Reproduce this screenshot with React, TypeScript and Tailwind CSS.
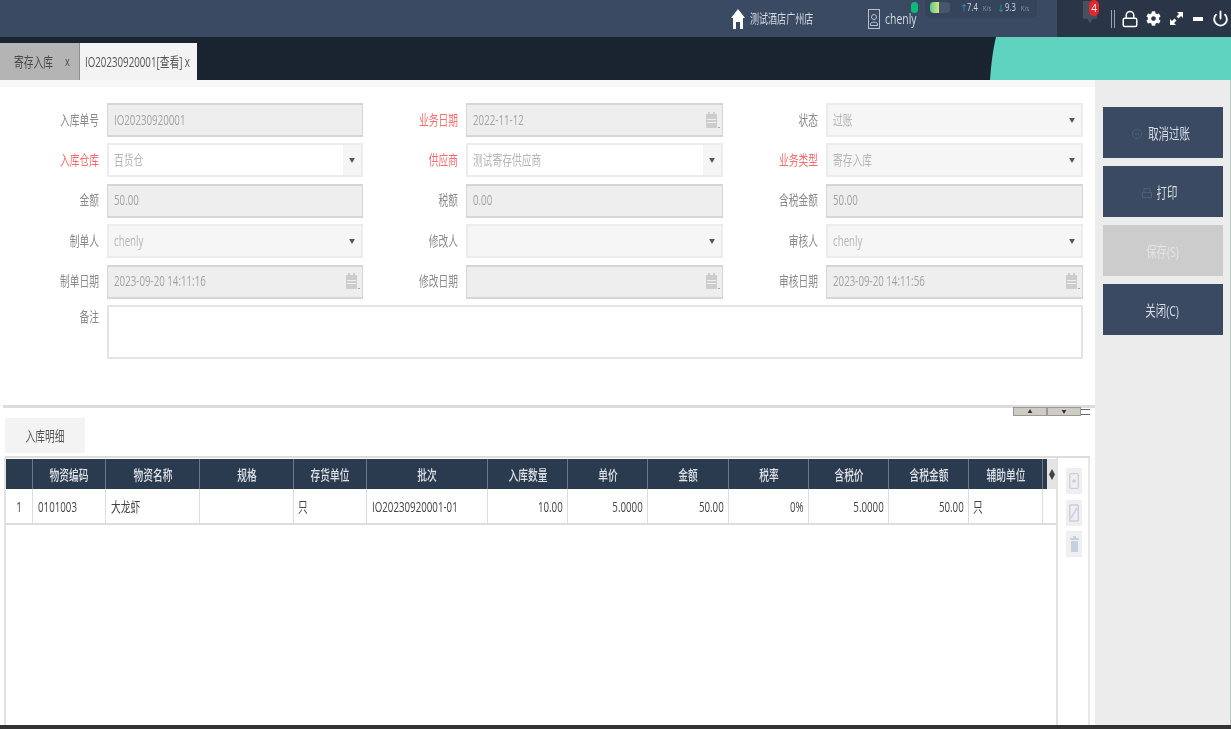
import { ReactNode } from 'react'
import { FaCog } from 'react-icons/fa'
import { Lock, Power } from 'lucide-react'

const FONT = "font-['Open_Sans','Noto_Sans_CJK_SC',sans-serif]"

const GRID = 'grid grid-cols-[27px_73px_94px_94px_73px_121px_80px_80px_81px_80px_80px_80px_74px_4px]'

const HEADERS = ['', '物资编码', '物资名称', '规格', '存货单位', '批次', '入库数量', '单价', '金额', '税率', '含税价', '含税金额', '辅助单位', '']

const ROW: { text: string; cls: string; align: 'l' | 'c' | 'r' }[] = [
  { text: '1', cls: 'justify-center', align: 'c' },
  { text: '0101003', cls: 'pl-[5px]', align: 'l' },
  { text: '大龙虾', cls: 'pl-[5px]', align: 'l' },
  { text: '', cls: '', align: 'l' },
  { text: '只', cls: 'pl-[4px]', align: 'l' },
  { text: 'IO20230920001-01', cls: 'pl-[5px]', align: 'l' },
  { text: '10.00', cls: 'justify-end pr-[4px]', align: 'r' },
  { text: '5.0000', cls: 'justify-end pr-[4px]', align: 'r' },
  { text: '50.00', cls: 'justify-end pr-[4px]', align: 'r' },
  { text: '0%', cls: 'justify-end pr-[4px]', align: 'r' },
  { text: '5.0000', cls: 'justify-end pr-[4px]', align: 'r' },
  { text: '50.00', cls: 'justify-end pr-[4px]', align: 'r' },
  { text: '只', cls: 'pl-[4px]', align: 'l' },
  { text: '', cls: '', align: 'l' },
]

// the reference text is squeezed sideways, so every string goes through this
function T({ children, align = 'l', className = '' }: { children?: ReactNode; align?: 'l' | 'c' | 'r'; className?: string }) {
  const origin = align === 'l' ? 'origin-left' : align === 'r' ? 'origin-right' : 'origin-center'
  return <span className={`inline-block whitespace-nowrap scale-x-[0.695] ${origin} ${className}`}>{children}</span>
}

function CalendarIcon() {
  return (
    <svg width="16" height="19" viewBox="0 0 16 19" className="text-[#cdcdcd]">
      <rect x="1" y="3" width="11" height="14" rx="1" fill="currentColor" />
      <rect x="3" y="1" width="2" height="4" fill="currentColor" />
      <rect x="8" y="1" width="2" height="4" fill="currentColor" />
      <rect x="2" y="8" width="9" height="1" fill="#f0f0f0" />
      <rect x="2" y="11" width="9" height="1" fill="#f0f0f0" />
      <rect x="13" y="16" width="2" height="1" fill="#aaa" />
    </svg>
  )
}

function Caret() {
  return (
    <svg width="6" height="5" viewBox="0 0 7 6" fill="#555">
      <path d="M0 0h7L3.5 6z" />
    </svg>
  )
}

function Label({ text, red }: { text: string; red?: boolean }) {
  return (
    <div className={`flex items-center justify-end pr-2 pb-[2px] text-[14px] ${red ? 'text-[#f56c6c]' : 'text-[#8a8a8a]'}`}>
      <T align="r">{text}</T>
    </div>
  )
}

function Input({ value }: { value?: string }) {
  return (
    <div className="flex items-center h-[34px] bg-[#eeeeee] border-t-2 border-x border-b-2 border-[#d6d6d6] pl-[6px] pb-[2px] text-[14px] text-[#a3a3a3]">
      <T>{value}</T>
    </div>
  )
}

function DateInput({ value }: { value?: string }) {
  return (
    <div className="flex items-center justify-between h-[34px] bg-[#eeeeee] border-t-2 border-x border-b-2 border-[#d6d6d6] pl-[6px] pr-[1px] text-[14px] text-[#a3a3a3]">
      <span className="pb-[2px]"><T>{value}</T></span>
      <CalendarIcon />
    </div>
  )
}

function Select({ value, white }: { value?: string; white?: boolean }) {
  return (
    <div className={`flex items-center h-[34px] border-2 border-[#ececec] pl-[5px] text-[14px] text-[#b5b5b5] ${white ? 'bg-white' : 'bg-[#f6f6f6]'}`}>
      <span className="flex-1 min-w-0 pb-[2px]">
        <T>{value}</T>
      </span>
      <span className={`flex items-center justify-center h-full w-[18px] ${white ? 'bg-[#f5f5f5]' : ''}`}>
        <Caret />
      </span>
    </div>
  )
}

function SideButton({ children, disabled }: { children: ReactNode; disabled?: boolean }) {
  return (
    <button className={`flex items-center justify-center w-[120px] h-[51px] pt-[2px] text-[15px] ${disabled ? 'bg-[#cccccc] text-[#e4e4e4]' : 'bg-[#3a4a63] text-[#d8dde4]'}`}>
      {children}
    </button>
  )
}

function ToolIcon({ children }: { children: ReactNode }) {
  return (
    <div className="flex items-center justify-center w-[16px] h-[26px] bg-[#efefef]">
      {children}
    </div>
  )
}

export default function App() {
  return (
    <div className={`${FONT} relative w-[1231px] h-[729px] overflow-hidden flex flex-col bg-white blur-[0.5px]`}>
      {/* top bar */}
      <header className="flex h-[37px] shrink-0 bg-[#3a4a63] text-[#d5dae2]">
        <div className="flex-1 flex items-center relative">
          <div className="flex items-center ml-[731px] gap-[5px] text-[13px]">
            <svg width="14" height="20" viewBox="0 0 14 20" fill="white">
              <path d="M7 0 14 9h-2v11H9v-7H5v7H2V9H0z" />
            </svg>
            <T>测试酒店广州店</T>
          </div>
          <div className="flex items-center ml-[27px] gap-[5px] text-[15px]">
            <svg width="12" height="20" viewBox="0 0 12 20" fill="none" stroke="#b9c0cb" strokeWidth="1">
              <rect x="0.5" y="0.5" width="11" height="19" />
              <circle cx="6" cy="8" r="2.5" />
              <path d="M2.5 15c0-2.5 7-2.5 7 0v1.5h-7z" />
            </svg>
            <T>chenly</T>
          </div>
          {/* network status */}
          <div className="absolute left-[911px] top-[2px] flex items-start">
            <span className="w-[7px] h-[11px] rounded-full bg-[#0fb97a]" />
            <div className="flex items-start h-[18px] -mt-[2px] ml-[7px] pt-[2px] pl-[5px] pr-[5px] rounded-b-[6px] bg-[#35445b] gap-[10px]">
              <div className="flex w-[20px] h-[11px] rounded-[4px] overflow-hidden bg-[#46566d]">
                <span className="w-[9px] bg-gradient-to-r from-[#3fd08a] to-[#d8e27a]" />
              </div>
              <div className="flex items-center h-[11px] w-[72px] text-[11px]">
                <span className="w-[7px] text-[8px] text-[#29a5e6]">↑</span>
                <span className="w-[16px]"><T>7.4</T></span>
                <span className="w-[14px] text-[8px] text-[#8a96a6]"><T>K/s</T></span>
                <span className="w-[8px] text-[8px] text-[#18c07a]">↓</span>
                <span className="w-[16px]"><T>9.3</T></span>
                <span className="w-[10px] text-[8px] text-[#8a96a6]"><T>K/s</T></span>
              </div>
            </div>
          </div>
        </div>
        <div className="flex items-center w-[174px] bg-[#2a3547] text-white relative">
          <svg width="16" height="25" viewBox="0 0 18 26" className="ml-[25px] -mt-[12px]" fill="#46515f">
            <path d="M1 0h16v20h-5l-3 5-3-5H1z" />
          </svg>
          <span className="absolute left-[32px] top-0 flex items-center justify-center w-[10px] h-[16px] rounded-full bg-[#e8242c] text-[10px] text-white">4</span>
          <span className="ml-[13px] w-[4px] h-[18px] border-x border-[#9aa3af]" />
          <Lock size={18} strokeWidth={2} className="ml-[6px]" />
          <FaCog size={15} className="ml-[7px]" />
          <svg width="13" height="13" viewBox="0 0 13 13" fill="white" className="ml-[9px]">
            <path d="M7 0h6v6l-2-2-2.5 2.5-2-2L9 2zM0 13V7l2 2 2.5-2.5 2 2L4 11l2 2z" />
          </svg>
          <span className="ml-[10px] w-[10px] h-[4px] bg-white" />
          <Power size={17} strokeWidth={2.6} className="ml-[9px]" />
        </div>
      </header>

      {/* tab bar */}
      <div className="relative flex items-end h-[43px] shrink-0 bg-[#1a2330]">
        <div className="flex items-center h-[37px] w-[80px] bg-[#b4b4b4] border-r border-[#8d8d8d] text-[14px] text-[#4a4a4a]">
          <span className="ml-[14px] w-[51px]"><T>寄存入库</T></span>
          <T className="text-[13px]">x</T>
        </div>
        <div className="flex items-center h-[37px] w-[117px] bg-[#f3f3f3] text-[14px] text-[#555]">
          <span className="ml-[5px]"><T>IO20230920001[查看] x</T></span>
        </div>
        <svg className="absolute right-0 top-0" width="241" height="43" viewBox="0 0 241 43" preserveAspectRatio="none">
          <path d="M6 0H241V43H0C1 28 3 12 6 0z" fill="#5fd3bf" />
        </svg>
      </div>

      {/* body */}
      <div className="flex flex-1 min-h-0">
        <main className="flex-1 min-w-0 flex flex-col bg-white">
          <div className="h-[7px] bg-[#f8f8f8] shrink-0" />
          <section className="h-[318px] shrink-0 pt-[16px]">
            <div className="grid grid-cols-[107px_256px_103px_257px_103px_257px] auto-rows-[34px] gap-y-[6.4px]">
              <Label text="入库单号" />
              <Input value="IO20230920001" />
              <Label text="业务日期" red />
              <DateInput value="2022-11-12" />
              <Label text="状态" />
              <Select value="过账" />

              <Label text="入库仓库" red />
              <Select value="百货仓" white />
              <Label text="供应商" red />
              <Select value="测试寄存供应商" white />
              <Label text="业务类型" red />
              <Select value="寄存入库" />

              <Label text="金额" />
              <Input value="50.00" />
              <Label text="税额" />
              <Input value="0.00" />
              <Label text="含税金额" />
              <Input value="50.00" />

              <Label text="制单人" />
              <Select value="chenly" />
              <Label text="修改人" />
              <Select />
              <Label text="审核人" />
              <Select value="chenly" />

              <Label text="制单日期" />
              <DateInput value="2023-09-20 14:11:16" />
              <Label text="修改日期" />
              <DateInput />
              <Label text="审核日期" />
              <DateInput value="2023-09-20 14:11:56" />

              <div className="flex justify-end pr-2 pt-[1px] text-[14px] text-[#8a8a8a]"><T align="r">备注</T></div>
              <div className="col-span-5 h-[54px] border-2 border-[#e4e4e4] bg-white" />
            </div>
          </section>

          {/* splitter */}
          <div className="relative ml-[3px] h-[3px] shrink-0 bg-[#dcdcdc]">
            <div className="absolute right-[5px] top-[2px] flex items-center h-[9px]">
              <span className="flex items-center justify-center w-[34px] h-[9px] bg-[#cfccc4] border border-[#999] text-[5px] text-[#333]">▲</span>
              <span className="flex items-center justify-center w-[34px] h-[9px] bg-[#cfccc4] border border-[#999] text-[5px] text-[#333]">▼</span>
              <span className="w-[9px] h-[6px] border-y border-[#666]" />
            </div>
          </div>

          <div className="flex-1 min-h-0 flex flex-col pl-[5px] pr-[5px] pt-[10px]">
            <div className="flex items-center justify-center w-[80px] h-[35px] shrink-0 bg-[#f3f3f3] text-[14px] text-[#555]">
              <T align="c">入库明细</T>
            </div>
            <div className="flex flex-1 min-h-0 mt-[3px] border-t-2 border-[#dddddd]">
              <div className="flex-1 min-w-0 -ml-[1px] border-x-2 border-[#e2e2e2] pt-[1px]">
                <div className="flex">
                  <div className={`${GRID} h-[30px] bg-[#2a3a4f]`}>
                    {HEADERS.map((h, i) => (
                      <div key={i} className="flex items-center justify-center border-r border-[#6b7787] last:border-r-0 text-[14px] font-medium text-[#dfe3e8]">
                        <T align="c">{h}</T>
                      </div>
                    ))}
                  </div>
                  <div className="flex-1 flex items-center justify-center bg-[#e4e4e4]">
                    <svg width="6" height="11" viewBox="0 0 6 11" fill="#444">
                      <path d="M3 0l3 5.5-3 5.5-3-5.5z" />
                    </svg>
                  </div>
                </div>
                <div className={`${GRID} h-[36px] border-b-2 border-[#dcdcdc]`}>
                  {ROW.map((c, i) => (
                    <div key={i} className={`flex items-center border-r border-[#dcdcdc] text-[14px] text-[#444] last:border-r-0 ${c.cls}`}>
                      <T align={c.align}>{c.text}</T>
                    </div>
                  ))}
                </div>
              </div>
              <div className="w-[32px] shrink-0 flex flex-col items-center gap-[5.5px] pt-[10px] pl-[2px] border-r-2 border-[#e8e8e8]">
                <ToolIcon>
                  <svg width="10" height="16" viewBox="0 0 10 16" fill="none" stroke="#c8cfdf" strokeWidth="1.3">
                    <rect x="0.7" y="0.7" width="8.6" height="14.6" rx="1" />
                    <path d="M5 6v4M3 8h4" />
                  </svg>
                </ToolIcon>
                <ToolIcon>
                  <svg width="10" height="18" viewBox="0 0 10 18" fill="none" stroke="#c8cfdf" strokeWidth="1.5">
                    <rect x="0.7" y="1" width="8.6" height="16" rx="1" />
                    <path d="M2 14 8 4" />
                  </svg>
                </ToolIcon>
                <ToolIcon>
                  <svg width="9" height="16" viewBox="0 0 9 16" fill="#c8cfdf">
                    <rect x="3" y="0" width="3" height="2" />
                    <rect x="0" y="2" width="9" height="2" />
                    <rect x="1" y="5" width="7" height="11" rx="1" />
                  </svg>
                </ToolIcon>
              </div>
            </div>
          </div>
        </main>

        <aside className="w-[136px] shrink-0 flex flex-col items-center gap-[8px] pt-[27px] bg-[#ececec] border-r border-[#b9c9c5]">
          <SideButton>
            <svg width="10" height="10" viewBox="0 0 10 10" fill="none" stroke="#4d6078" className="ml-[6px] -mr-[3px]">
              <circle cx="5" cy="5" r="4.5" />
              <path d="M2.5 5h5" />
            </svg>
            <T align="c">取消过账</T>
          </SideButton>
          <SideButton>
            <svg width="10" height="10" viewBox="0 0 10 10" fill="none" stroke="#4d6078">
              <rect x="2" y="0.5" width="6" height="4" />
              <rect x="0.5" y="4.5" width="9" height="5" />
            </svg>
            <T align="c">打印</T>
          </SideButton>
          <SideButton disabled><T align="c">保存(S)</T></SideButton>
          <SideButton><T align="c">关闭(C)</T></SideButton>
        </aside>
      </div>

      <div className="h-[4px] shrink-0 bg-[#333333]" />
    </div>
  )
}
